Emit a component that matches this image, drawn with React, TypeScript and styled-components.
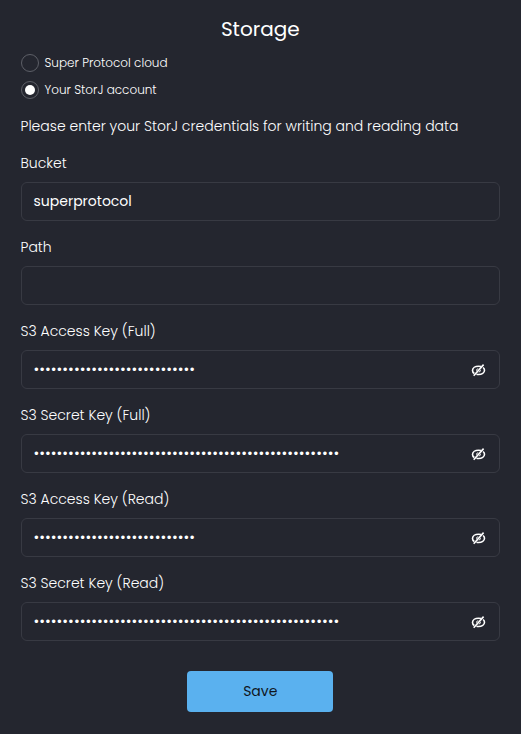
import React, { useState } from 'react';
import styled, { createGlobalStyle } from 'styled-components';

const GlobalStyle = createGlobalStyle`
  * { box-sizing: border-box; }
  body {
    margin: 0;
    background: #24262f;
    color: #fff;
    font-family: Poppins, Inter, sans-serif;
  }
`;

const Panel = styled.main`
  display: flex;
  flex-direction: column;
  width: 521px;
  height: 734px;
  padding: 14px 21px 0 20.5px;
  background: #24262f;
`;

const Title = styled.h1`
  margin: 0 0 10px;
  font-size: 20px;
  line-height: 30px;
  font-weight: 400;
  text-align: center;
`;

const RadioList = styled.div`
  display: flex;
  flex-direction: column;
  gap: 9px;
`;

const RadioRow = styled.label`
  display: flex;
  align-items: center;
  gap: 6px;
  height: 18px;
  color: #fff;
  font-size: 12px;
  font-weight: 300;
  white-space: nowrap;
  cursor: pointer;
`;

const RadioInput = styled.input`
  appearance: none;
  display: grid;
  place-items: center;
  width: 18px;
  height: 18px;
  margin: 0;
  border: 1px solid #5d5f67;
  border-radius: 50%;

  &:checked::before {
    content: '';
    width: 10px;
    height: 10px;
    border-radius: 50%;
    background: #fff;
  }
`;

const Hint = styled.p`
  margin: 16px 0 0;
  color: #fff;
  font-size: 14px;
  line-height: 22px;
  font-weight: 300;
  white-space: nowrap;
`;

const Fields = styled.div`
  display: flex;
  flex-direction: column;
  gap: 15px;
  margin-top: 15px;
`;

const Field = styled.div`
  display: flex;
  flex-direction: column;
  gap: 8px;
`;

const FieldLabel = styled.div`
  color: #fff;
  font-size: 14px;
  line-height: 22px;
  font-weight: 300;
`;

const InputBox = styled.div`
  display: flex;
  align-items: center;
  justify-content: space-between;
  height: 39px;
  padding: 0 13px 0 12px;
  border: 1px solid #383a43;
  border-radius: 6px;
`;

const Value = styled.span`
  font-size: 14px;
  font-weight: 400;
`;

const EyeButton = styled.button`
  display: flex;
  padding: 0;
  border: 0;
  background: none;
  color: #fff;
  cursor: pointer;
`;

const SaveButton = styled.button`
  align-self: center;
  width: 146px;
  height: 41px;
  margin-top: 30px;
  border: 0;
  border-radius: 4px;
  background: #5ab1ef;
  color: #10161d;
  font: 400 14px Poppins, Inter, sans-serif;
  cursor: pointer;
`;

const EyeOff = () => (
  <svg width="16" height="16" viewBox="0 0 16 16" fill="none" stroke="currentColor" strokeWidth="1.6">
    <path d="M4.3 11.5C3.1 10.7 2.5 9.6 2.5 8.4c0-2.4 2.7-4.2 6-4.2.9 0 1.8.1 2.5.4" />
    <path d="M13.1 5.5c.9.8 1.4 1.8 1.4 2.8 0 2.4-2.7 4.2-6 4.2-.7 0-1.4-.1-2-.3" />
    <path d="M13.6 2.6 3.7 13.8" />
    <path d="M6.1 9.3C5.7 7.7 6.9 6.3 8.6 6.3L6.1 9.3ZM10.8 7.4c.5 1.6-.7 3-2.4 3L10.8 7.4Z" fill="currentColor" stroke="none" />
  </svg>
);

const fields = [
  { label: 'Bucket', value: 'superprotocol' },
  { label: 'Path', value: '' },
  { label: 'S3 Access Key (Full)', secretLength: 28 },
  { label: 'S3 Secret Key (Full)', secretLength: 53 },
  { label: 'S3 Access Key (Read)', secretLength: 28 },
  { label: 'S3 Secret Key (Read)', secretLength: 53 },
];

const accounts = ['Super Protocol cloud', 'Your StorJ account'];

export default function App() {
  const [account, setAccount] = useState(1);
  return (
    <>
      <GlobalStyle />
      <Panel>
        <Title>Storage</Title>
        <RadioList>
          {accounts.map((label, i) => (
            <RadioRow key={label}>
              <RadioInput type="radio" name="account" checked={account === i} onChange={() => setAccount(i)} />
              <span>{label}</span>
            </RadioRow>
          ))}
        </RadioList>
        <Hint>Please enter your StorJ credentials for writing and reading data</Hint>
        <Fields>
          {fields.map((field) => (
            <Field key={field.label}>
              <FieldLabel>{field.label}</FieldLabel>
              <InputBox>
                {field.secretLength ? (
                  <>
                    <Value>{'•'.repeat(field.secretLength)}</Value>
                    <EyeButton type="button" aria-label="Show key">
                      <EyeOff />
                    </EyeButton>
                  </>
                ) : (
                  <Value>{field.value}</Value>
                )}
              </InputBox>
            </Field>
          ))}
        </Fields>
        <SaveButton type="button">Save</SaveButton>
      </Panel>
    </>
  );
}
